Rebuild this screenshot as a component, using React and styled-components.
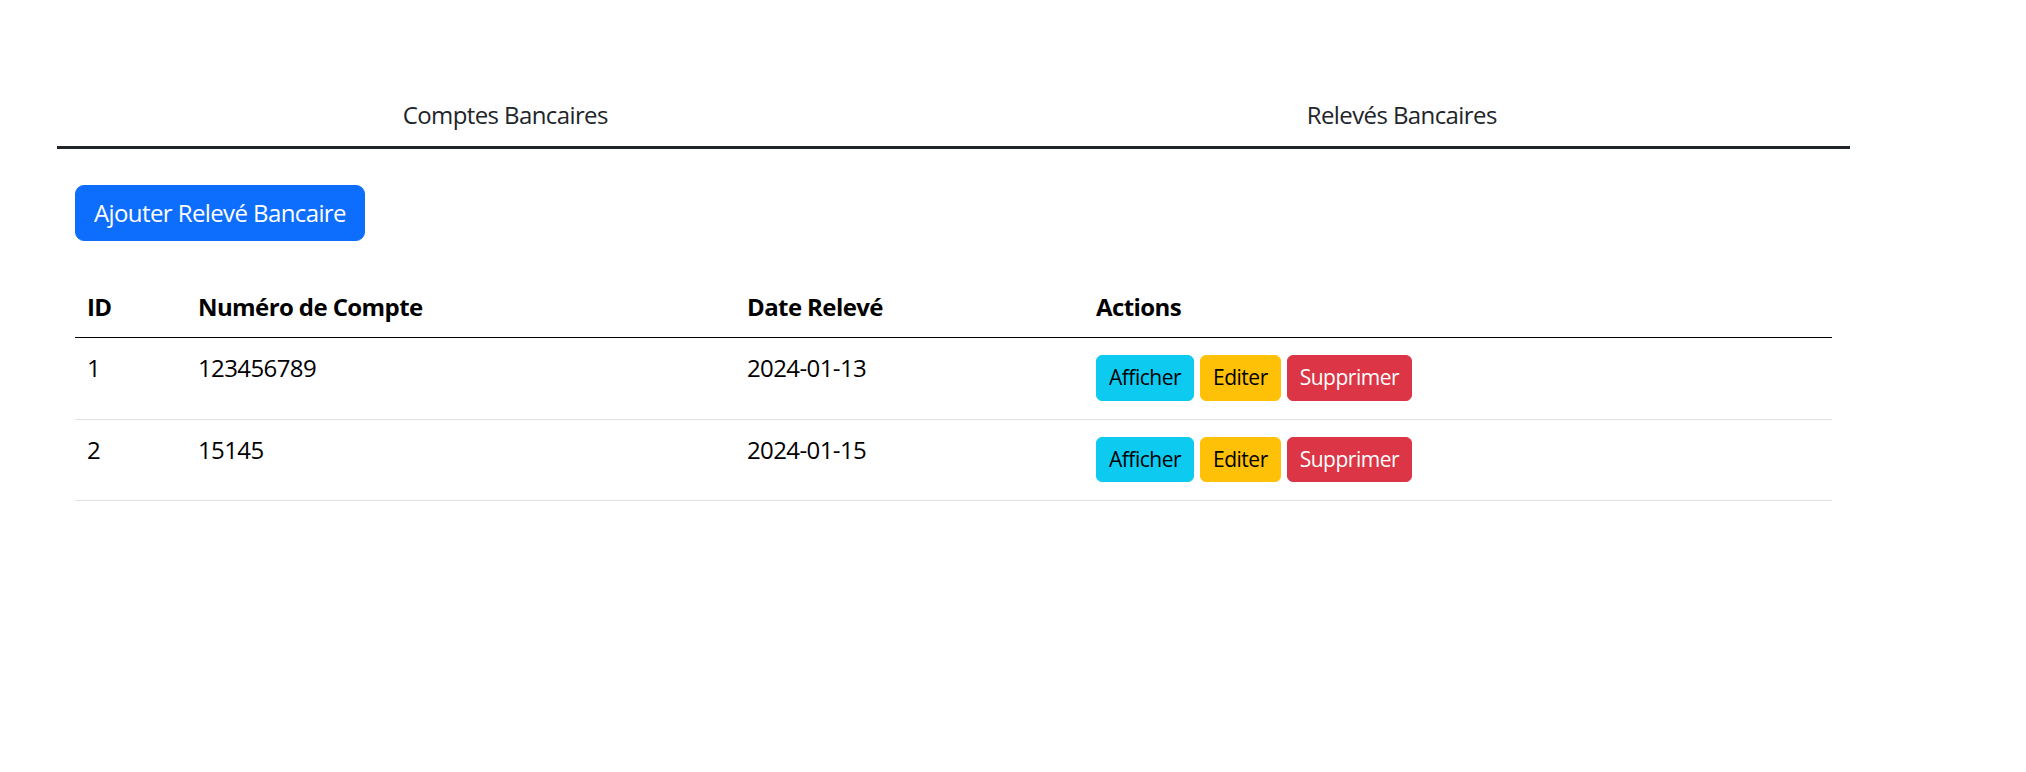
import React from "react";
import styled, { createGlobalStyle } from "styled-components";

const GlobalStyle = createGlobalStyle`
  body {
    margin: 0;
    background: #fff;
    font-family: "Segoe UI", "Open Sans", "Noto Sans", sans-serif;
    color: #212529;
  }
`;

const Page = styled.div`
  width: 1793px;
  padding: 86px 0 0 57px;
`;

const Tabs = styled.nav`
  display: flex;
  border-bottom: 3px solid #212529;
`;

const Tab = styled.div`
  flex: 1;
  text-align: center;
  padding: 11px 24px 13px;
  font-size: 24px;
  line-height: 36px;
  letter-spacing: -0.6px;
  color: #212529;
`;

const Content = styled.div`
  padding: 36px 18px 0;
`;

const AddButton = styled.button`
  font-family: inherit;
  font-size: 24px;
  line-height: 36px;
  letter-spacing: -0.6px;
  padding: 9px 18px;
  color: #fff;
  background: #0d6efd;
  border: 1px solid #0d6efd;
  border-radius: 9px;
`;

const Table = styled.table`
  width: 100%;
  margin-top: 36px;
  border-collapse: collapse;
  table-layout: fixed;
  color: #000;
  font-size: 24px;
  line-height: 36px;
  letter-spacing: -0.6px;
`;

const Th = styled.th`
  box-sizing: border-box;
  width: ${(p) => p.$w || "auto"};
  padding: 12px;
  text-align: left;
  font-weight: 700;
  border-bottom: 1.5px solid #000;
`;

const Td = styled.td`
  padding: 12px;
  vertical-align: top;
  border-bottom: 1.5px solid #dee2e6;
`;

const Actions = styled.div`
  display: flex;
  gap: 6px;
  padding: 5px 0 6px;
`;

const colors = {
  info: { bg: "#0dcaf0", fg: "#000" },
  warning: { bg: "#ffc107", fg: "#000" },
  danger: { bg: "#dc3545", fg: "#fff" },
};

const SmallButton = styled.button`
  font-family: inherit;
  font-size: 21px;
  line-height: 31.5px;
  letter-spacing: -0.5px;
  padding: 6px 12px;
  border-radius: 6px;
  border: 1.5px solid ${(p) => colors[p.$variant].bg};
  background: ${(p) => colors[p.$variant].bg};
  color: ${(p) => colors[p.$variant].fg};
`;

const releves = [
  { id: 1, compte: "123456789", date: "2024-01-13" },
  { id: 2, compte: "15145", date: "2024-01-15" },
];

export default function App() {
  return (
    <Page>
      <GlobalStyle />
      <Tabs>
        <Tab>Comptes Bancaires</Tab>
        <Tab>Relevés Bancaires</Tab>
      </Tabs>
      <Content>
        <AddButton>Ajouter Relevé Bancaire</AddButton>
        <Table>
          <thead>
            <tr>
              <Th $w="111px">ID</Th>
              <Th $w="549px">Numéro de Compte</Th>
              <Th $w="349px">Date Relevé</Th>
              <Th>Actions</Th>
            </tr>
          </thead>
          <tbody>
            {releves.map((r) => (
              <tr key={r.id}>
                <Td>{r.id}</Td>
                <Td>{r.compte}</Td>
                <Td>{r.date}</Td>
                <Td>
                  <Actions>
                    <SmallButton $variant="info">Afficher</SmallButton>
                    <SmallButton $variant="warning">Editer</SmallButton>
                    <SmallButton $variant="danger">Supprimer</SmallButton>
                  </Actions>
                </Td>
              </tr>
            ))}
          </tbody>
        </Table>
      </Content>
    </Page>
  );
}
